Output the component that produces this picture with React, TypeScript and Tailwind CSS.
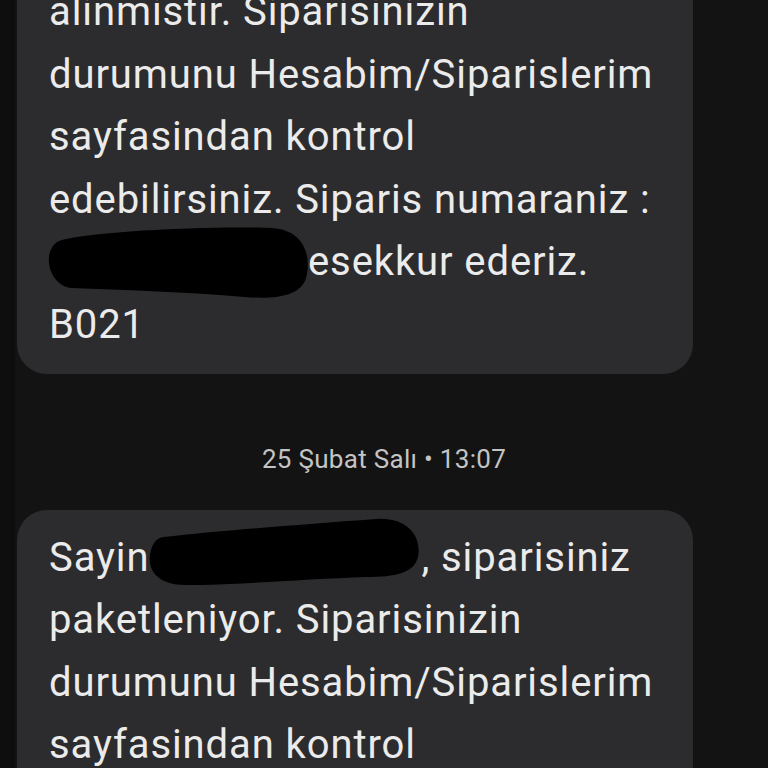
const FONT = { fontFamily: 'Roboto, "Noto Sans", sans-serif' };

function Blob({ className, d, w, h }: { className: string; d: string; w: number; h: number }) {
  return (
    <svg className={`pointer-events-none absolute ${className}`} width={w} height={h} viewBox={`0 0 ${w} ${h}`}>
      <path d={d} fill="#000" />
    </svg>
  );
}

function Line({ children }: { children: React.ReactNode }) {
  return <div className="whitespace-nowrap">{children}</div>;
}

const bubble =
  'relative mr-[75px] ml-[17px] shrink-0 rounded-[30px] bg-[#2c2c2e] px-[32px] py-[17px] text-[40px] leading-[62.6px] tracking-[0.9px] text-[#ebebeb]';

export default function App() {
  return (
    <div
      className="flex h-[768px] w-[768px] flex-col overflow-hidden bg-[linear-gradient(to_right,#0e0e0e_15px,#131313_15px)]"
      style={FONT}
    >
      <div className={`${bubble} -mt-[36px]`}>
        <Line>alinmistir. Siparisinizin</Line>
        <Line>durumunu Hesabim/Siparislerim</Line>
        <Line>sayfasindan kontrol</Line>
        <Line>edebilirsiniz. Siparis numaraniz :</Line>
        <Line>
          <span className="inline-block w-[259px]" />
          esekkur ederiz.
        </Line>
        <Line>B021</Line>
        <Blob
          className="top-[262px] left-[25px]"
          w={268}
          h={74}
          d="M20 14 C60 4 180 0 230 2 C262 4 270 30 264 52 C258 72 230 74 190 70 C140 66 80 64 30 62 C5 60 -2 20 20 14 Z"
        />
      </div>
      <div className="flex h-[136px] shrink-0 items-center justify-center pt-[35px] text-[26px] tracking-[0.3px] text-[#c4c4c4]">
        25 Şubat Salı • 13:07
      </div>
      <div className={bubble}>
        <Line>
          Sayin<span className="inline-block w-[272px]" />, siparisiniz
        </Line>
        <Line>paketleniyor. Siparisinizin</Line>
        <Line>durumunu Hesabim/Siparislerim</Line>
        <Line>sayfasindan kontrol</Line>
        <Line>edebilirsiniz. Siparis numaraniz :</Line>
        <Blob
          className="top-[7px] left-[129px]"
          w={278}
          h={70}
          d="M18 20 C70 14 150 8 230 2 C262 0 276 20 272 40 C268 56 250 60 220 60 C160 62 90 68 40 68 C10 68 2 52 4 38 C6 26 10 21 18 20 Z"
        />
      </div>
    </div>
  );
}
